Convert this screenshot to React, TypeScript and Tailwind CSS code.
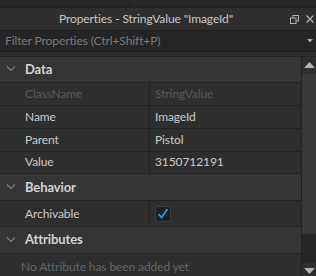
import React from "react";

const Chevron = () => (
  <svg width="10" height="6" viewBox="0 0 10 6" className="shrink-0">
    <path d="M1 0.5 L5 4.5 L9 0.5" fill="none" stroke="#7d7d7d" strokeWidth="1.2" />
  </svg>
);

const Header = ({ label, h }: { label: string; h: string }) => (
  <div className={`flex items-center ${h} bg-[#353535] border-b border-[#222222]`}>
    <div className="w-[25px] pl-[6px] flex items-center">
      <Chevron />
    </div>
    <span className="text-[13px] font-bold text-[#d4d4d4] tracking-[-0.1px]">{label}</span>
  </div>
);

const Row = ({
  name,
  value,
  dim,
  h,
}: {
  name: string;
  value: React.ReactNode;
  dim?: boolean;
  h: string;
}) => (
  <div className={`flex ${h} border-b border-[#222222] bg-[#2e2e2e]`}>
    <div
      className={`w-[150px] shrink-0 border-r border-[#222222] pl-[25px] flex items-center text-[12px] tracking-[-0.1px] ${
        dim ? "text-[#5a5a5a]" : "text-[#cccccc]"
      }`}
    >
      {name}
    </div>
    <div
      className={`flex-1 pl-[5px] flex items-center text-[12px] tracking-[-0.1px] ${
        dim ? "text-[#5a5a5a]" : "text-[#cccccc]"
      }`}
    >
      {value}
    </div>
  </div>
);

export default function App() {
  return (
    <div
      className="w-[316px] h-[276px] overflow-hidden bg-[#2e2e2e] flex flex-col"
      style={{ fontFamily: 'Lato, "Open Sans", sans-serif' }}
    >
      {/* top strip */}
      <div className="h-[8px] bg-[#282828] flex border-b border-[#222222] shrink-0">
        <div className="w-[130px] border-r border-[#1e1e1e]" />
      </div>
      {/* title bar */}
      <div className="h-[22px] flex items-center shrink-0">
        <div className="flex-1 text-center text-[12px] tracking-[-0.1px] text-[#c8c8c8] pl-[2px]">
          Properties - StringValue "ImageId"
        </div>
        <div className="flex items-center gap-[7px] pr-[2px]">
          <svg width="9" height="9" viewBox="0 0 9 9">
            <rect x="3" y="0.5" width="5.5" height="5.5" fill="none" stroke="#b4b4b4" strokeWidth="1" />
            <rect x="0.5" y="3" width="5.5" height="5.5" fill="#2e2e2e" stroke="#b4b4b4" strokeWidth="1" />
          </svg>
          <svg width="8" height="8" viewBox="0 0 8 8">
            <path d="M0.5 0.5 L7.5 7.5 M7.5 0.5 L0.5 7.5" stroke="#b4b4b4" strokeWidth="1.3" />
          </svg>
        </div>
      </div>
      {/* filter */}
      <div className="h-[22px] bg-[#252525] border-y border-[#1e1e1e] flex items-center shrink-0">
        <div className="flex-1 pl-[5px] text-[12px] tracking-[-0.1px] text-[#7a7a7a]">
          Filter Properties (Ctrl+Shift+P)
        </div>
        <svg width="6" height="4" viewBox="0 0 6 4" className="mr-[3px]">
          <path d="M0 0 L6 0 L3 3.5 Z" fill="#a8a8a8" />
        </svg>
      </div>
      <div className="h-[4px] shrink-0" />
      {/* grid */}
      <div className="flex flex-1 min-h-0 border-t border-[#222222]">
        <div className="flex-1 flex flex-col border-r border-[#222222]">
          <Header label="Data" h="h-[26px]" />
          <Row name="ClassName" value="StringValue" dim h="h-[23px]" />
          <Row name="Name" value="ImageId" h="h-[23px]" />
          <Row name="Parent" value="Pistol" h="h-[23px]" />
          <Row name="Value" value="3150712191" h="h-[23px]" />
          <Header label="Behavior" h="h-[27px]" />
          <Row
            name="Archivable"
            h="h-[26px]"
            value={
              <div className="w-[16px] h-[16px] bg-[#1f1f1f] border border-[#3c3c3c] flex items-center justify-center">
                <svg width="12" height="11" viewBox="0 0 12 11">
                  <path d="M1.5 6 L4.5 9.5 L10.5 1" fill="none" stroke="#1e9cf0" strokeWidth="1.8" />
                </svg>
              </div>
            }
          />
          <Header label="Attributes" h="h-[27px]" />
          <div className="pl-[21px] pt-[4px] text-[12px] tracking-[-0.1px] text-[#666666]">
            No Attribute has been added yet
          </div>
        </div>
        {/* scrollbar */}
        <div className="w-[14px] shrink-0 flex flex-col bg-[#2e2e2e]">
          <div className="h-[16px] flex items-center justify-center shrink-0">
            <svg width="11" height="6" viewBox="0 0 11 6">
              <path d="M0 6 L5.5 0 L11 6 Z" fill="#b4b4b4" />
            </svg>
          </div>
          <div className="h-[162px] bg-[#383838] border-y border-[#2a2a2a] shrink-0" />
          <div className="h-[28px] bg-[#262626] shrink-0" />
          <div className="h-[13px] flex items-center justify-center shrink-0 pt-[2px]">
            <svg width="11" height="6" viewBox="0 0 11 6">
              <path d="M0 0 L11 0 L5.5 6 Z" fill="#b4b4b4" />
            </svg>
          </div>
        </div>
      </div>
    </div>
  );
}
